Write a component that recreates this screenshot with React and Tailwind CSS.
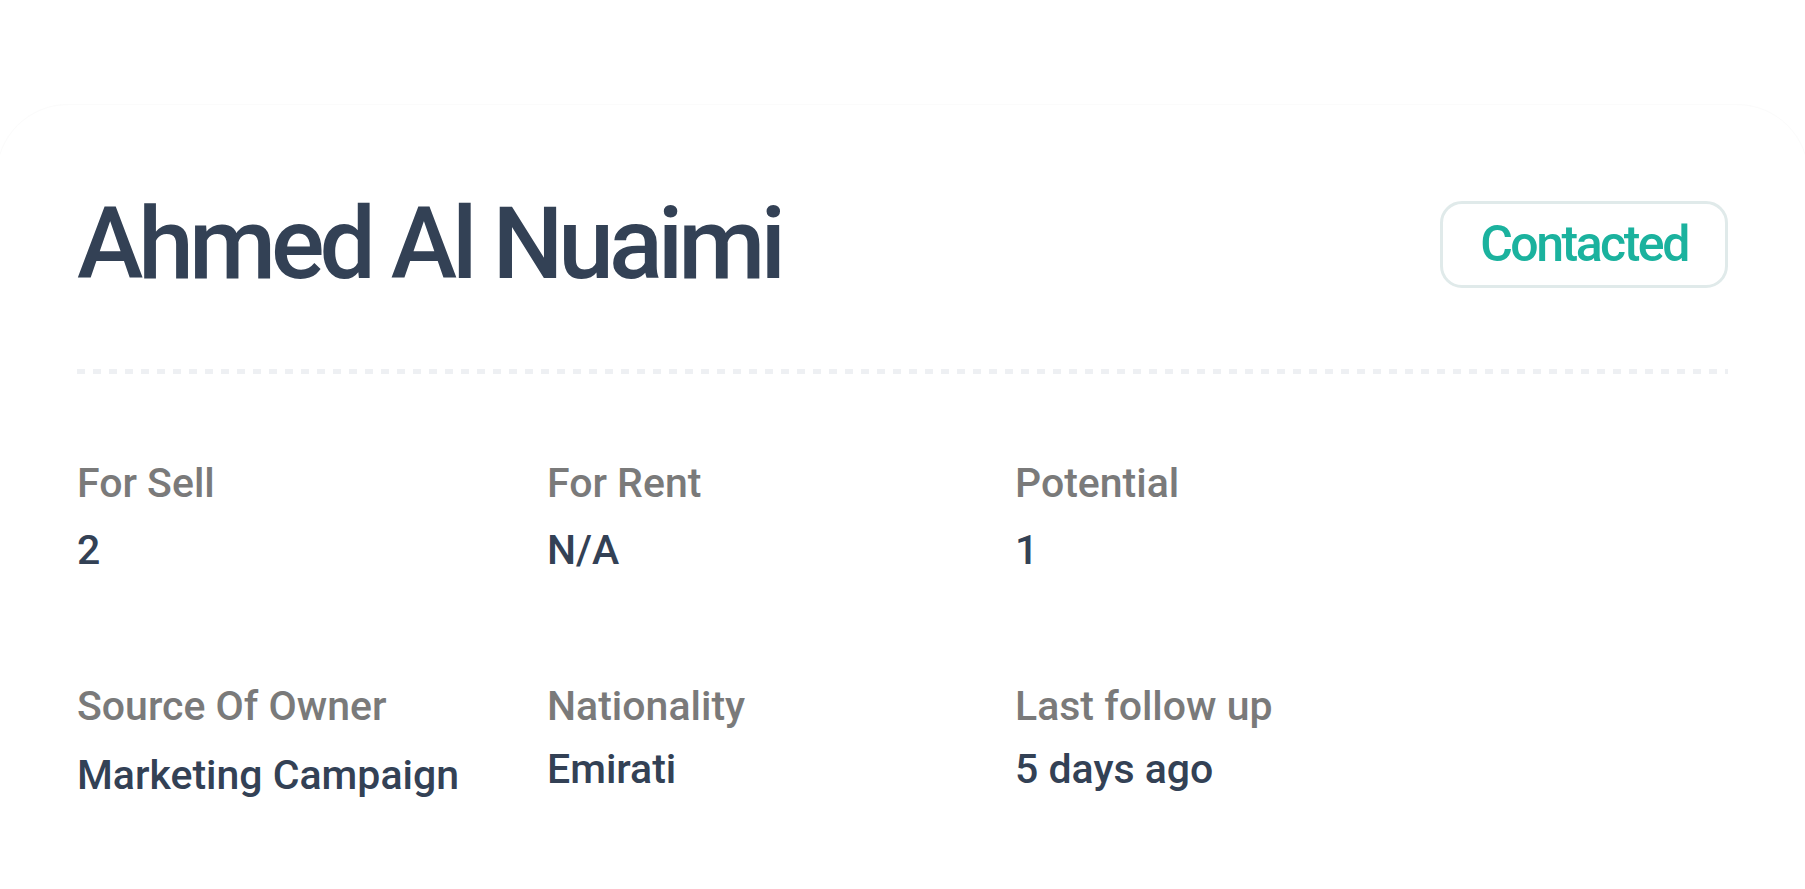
const fields = [
  { label: 'For Sell', value: '2', gap: 'mt-[26px]' },
  { label: 'For Rent', value: 'N/A', gap: 'mt-[26px]' },
  { label: 'Potential', value: '1', gap: 'mt-[26px]' },
  { label: 'Source Of Owner', value: 'Marketing Campaign', gap: 'mt-[28px]' },
  { label: 'Nationality', value: 'Emirati', gap: 'mt-[22px]' },
  { label: 'Last follow up', value: '5 days ago', gap: 'mt-[22px]' },
];

function Field({ label, value, gap }) {
  return (
    <div className="flex flex-col">
      <span className="text-[41px] leading-none font-medium text-[#7a7a7a]">{label}</span>
      <span className={`${gap} text-[41px] leading-none font-medium text-[#334155]`}>{value}</span>
    </div>
  );
}

export default function App() {
  return (
    <div
      className="w-full h-[889px] overflow-hidden bg-white pt-[104px]"
      style={{ fontFamily: 'Roboto, "Liberation Sans", sans-serif' }}
    >
      <div className="mx-[-4px] h-[900px] rounded-[72px] border border-[#fbfbfb] pt-[89px] pl-[80px] pr-[80px]">
        <div className="flex items-center justify-between">
          <h1 className="text-[100px] leading-none font-medium tracking-[-5px] text-[#334155]">
            Ahmed Al Nuaimi
          </h1>
          <div className="flex h-[87px] w-[288px] items-center justify-center rounded-[22px] border-[3px] border-[#e0eaea]">
            <span className="text-[50px] leading-none font-medium tracking-[-2.5px] text-[#1bb29e]">
              Contacted
            </span>
          </div>
        </div>

        <div className="mt-[75px] h-[5px] bg-[repeating-linear-gradient(90deg,#eef0f3_0_8px,transparent_8px_16px)]" />

        <div className="mt-[89px] grid grid-cols-[470px_468px_1fr] gap-y-[115px]">
          {fields.map((f) => (
            <Field key={f.label} {...f} />
          ))}
        </div>
      </div>
    </div>
  );
}
